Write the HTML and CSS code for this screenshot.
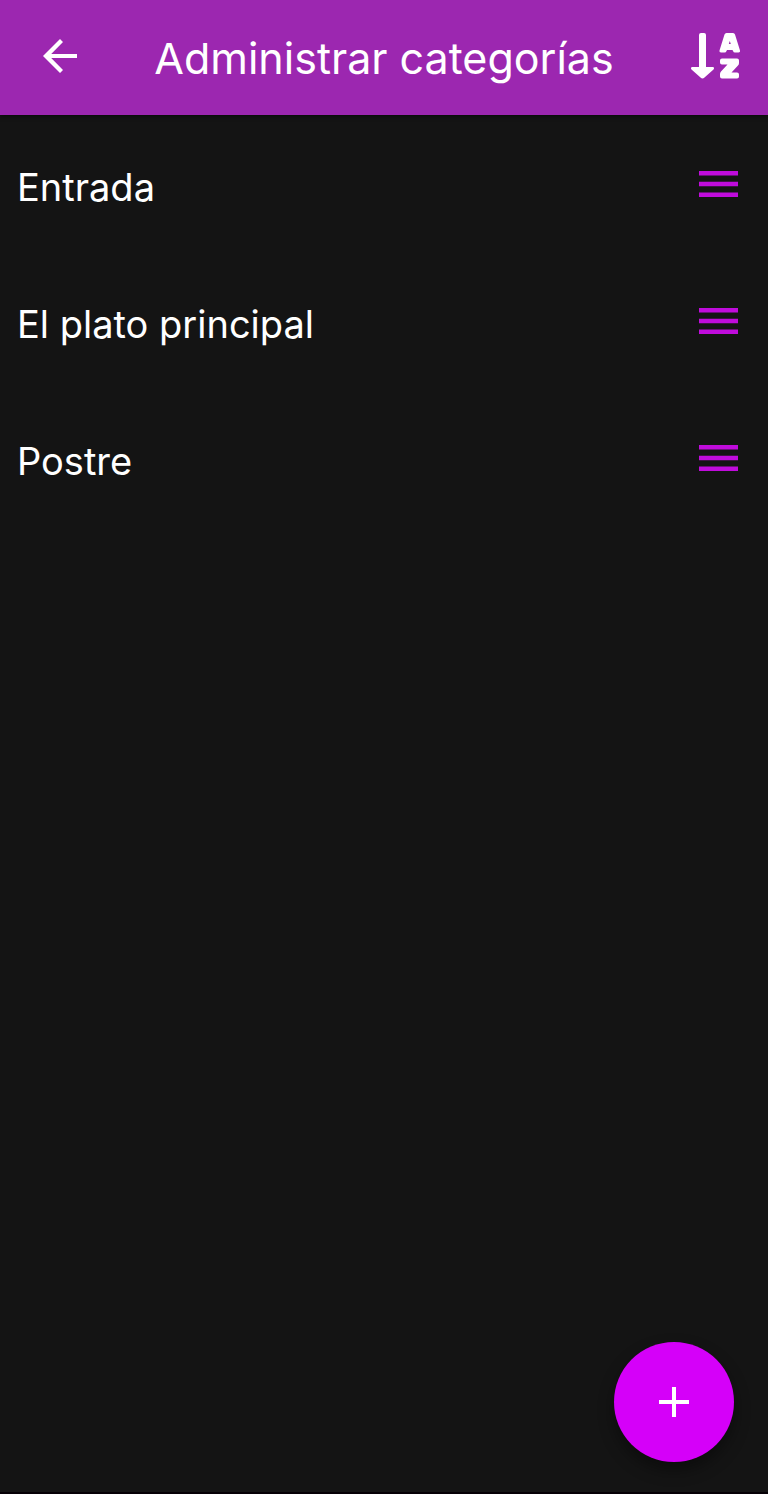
FILE: index.html
```
<!DOCTYPE html>
<html lang="es">
<head>
<meta charset="utf-8">
<meta name="viewport" content="width=device-width, initial-scale=1">
<title>Administrar categorías</title>
<link rel="stylesheet" href="styles.css">
</head>
<body>
<header class="bar">
  <button class="icon-button" type="button" aria-label="Volver">
    <svg class="back-icon" viewBox="0 0 34 34" aria-hidden="true"><path d="M34 15v4H8.200l11.800 12-3 3L0 17 17 0l3 3L8.200 15z"/></svg>
  </button>
  <h1 class="title">Administrar categorías</h1>
  <button class="icon-button" type="button" aria-label="Ordenar alfabéticamente">
    <svg class="sort-icon" viewBox="0 0 50 46" aria-hidden="true">
      <path d="M10 0h3q2 0 2 2v32h6.500q2.500 0 1 2.500l-9 8q-2 1.800-4 0l-9-8q-1.500-2.500 1-2.500H8V2q0-2 2-2z"/>
      <path fill-rule="evenodd" d="M35.500 0h6.500q1.500 0 2 1.500l5 16q.5 2-1.500 2h-3.500q-1.500 0-2-1.500l-.5-1h-5.500l-.5 1q-.5 1.500-2 1.500H30q-2 0-1.500-2l5-16Q34 0 35.500 0zM37.800 11h2l-1-3z"/>
      <path d="M31 25.500h15q2 0 2 2V30q0 1.500-1 2.500l-6.500 7H46q2 0 2 2V43.500q0 2-2 2H31q-2 0-2-2V41q0-1.500 1-2.500l6.500-7H31q-2 0-2-2v-2q0-2 2-2z"/>
    </svg>
  </button>
</header>
<main class="content">
  <ul class="list">
    <li class="row"><span class="name">Entrada</span>
      <button class="handle" type="button" aria-label="Mover Entrada"><svg class="handle-icon" viewBox="0 0 39 26" aria-hidden="true"><path d="M0 0h39v4.500H0zM0 10.750h39v4.500H0zM0 21.500h39V26H0z"/></svg></button></li>
    <li class="row"><span class="name">El plato principal</span>
      <button class="handle" type="button" aria-label="Mover El plato principal"><svg class="handle-icon" viewBox="0 0 39 26" aria-hidden="true"><path d="M0 0h39v4.500H0zM0 10.750h39v4.500H0zM0 21.500h39V26H0z"/></svg></button></li>
    <li class="row"><span class="name">Postre</span>
      <button class="handle" type="button" aria-label="Mover Postre"><svg class="handle-icon" viewBox="0 0 39 26" aria-hidden="true"><path d="M0 0h39v4.500H0zM0 10.750h39v4.500H0zM0 21.500h39V26H0z"/></svg></button></li>
  </ul>
</main>
<button class="add" type="button" aria-label="Añadir categoría">
  <svg class="add-icon" viewBox="0 0 30 30" aria-hidden="true"><path d="M13 0h4v13h13v4H17v13h-4V17H0v-4h13z"/></svg>
</button>
</body>
</html>
```
FILE: styles.css
```
* {
  box-sizing: border-box;
}

body {
  margin: 0;
  min-height: 100vh;
  display: flex;
  flex-direction: column;
  background: #141414;
  border-bottom: 2px solid #050005;
  color: #fff;
  font-family: Inter, sans-serif;
}

button {
  display: flex;
  align-items: center;
  justify-content: center;
  padding: 0;
  border: 0;
  background: none;
  color: inherit;
  cursor: pointer;
}

svg {
  display: block;
  fill: currentColor;
}

.bar {
  display: flex;
  align-items: center;
  justify-content: space-between;
  height: 115px;
  padding: 0 27px 4px 43px;
  background: #9c27b0;
  box-shadow: 0 1px 4px rgba(0, 0, 0, 0.6);
}

.back-icon {
  width: 34px;
}

.sort-icon {
  width: 50px;
}

.title {
  margin: 0;
  padding-top: 4px;
  font-size: 43px;
  font-weight: 400;
  line-height: 52px;
  white-space: nowrap;
}

.content {
  flex: 1;
}

.list {
  margin: 0;
  padding: 0;
  list-style: none;
}

.row {
  display: flex;
  align-items: center;
  justify-content: space-between;
  min-height: 137px;
  padding: 0 30px 0 17px;
}

.name {
  padding-top: 6px;
  font-size: 38px;
  line-height: 48px;
}

.handle {
  color: #c00cdc;
}

.handle-icon {
  width: 39px;
}

.add {
  position: fixed;
  right: 34px;
  bottom: 32px;
  width: 120px;
  height: 120px;
  border-radius: 50%;
  background: #d500f9;
  box-shadow: 0 8px 16px rgba(0, 0, 0, 0.4);
}

.add-icon {
  width: 30px;
}
```
